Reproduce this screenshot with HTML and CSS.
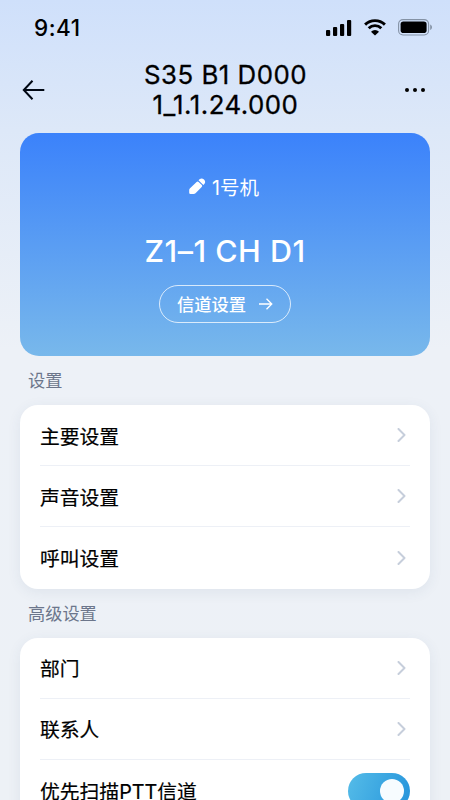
FILE: index.html
```html
<!DOCTYPE html>
<html lang="zh-CN">
<head>
  <meta charset="UTF-8">
  <meta name="viewport" content="width=device-width, initial-scale=1">
  <title>设置</title>
  <link rel="stylesheet" href="styles.css">
</head>
<body>
  <div class="status-bar">
    <span class="time">9:41</span>
    <div class="status-icons">
      <svg width="26" height="16" viewBox="0 0 26 16">
        <rect x="0" y="10" width="4.2" height="6" rx="1"/>
        <rect x="7" y="7" width="4.2" height="9" rx="1"/>
        <rect x="14" y="4" width="4.2" height="12" rx="1"/>
        <rect x="21" y="0" width="4.2" height="16" rx="1"/>
      </svg>
      <svg width="24" height="17" viewBox="0 0 24 17">
        <path d="M2.1 5.6A14.2 14.2 0 0 1 21.9 5.6M5.7 9.2A9 9 0 0 1 18.3 9.2" fill="none" stroke="#000" stroke-width="2.9"/>
        <path d="M8 12.7A5.8 5.8 0 0 1 16 12.7L12 16.6Z"/>
      </svg>
      <svg width="35" height="17" viewBox="0 0 35 17">
        <rect x=".6" y=".6" width="30" height="15.4" rx="4.4" fill="none" stroke="#8492a5" stroke-width="1.1"/>
        <rect x="2.6" y="2.6" width="26" height="11.4" rx="2.8"/>
        <path d="M32.2 5.6C34.6 6.6 34.6 10 32.2 11Z" fill="#8492a5"/>
      </svg>
    </div>
  </div>

  <div class="header">
    <svg class="back" width="24" height="22" viewBox="0 0 24 22">
      <path d="M22.3 11H2M10.5 1.7L1.8 11L10.5 20.3" fill="none" stroke="#000713" stroke-width="2"/>
    </svg>
    <h1>S35 B1 D000<br>1_1.1.24.000</h1>
    <svg class="more" width="20" height="4" viewBox="0 0 20 4">
      <circle cx="2" cy="2" r="2"/>
      <circle cx="10" cy="2" r="2"/>
      <circle cx="18" cy="2" r="2"/>
    </svg>
  </div>

  <div class="device-card">
    <div class="device-name">
      <svg width="17" height="17" viewBox="0 0 17 17" fill="#fff">
        <path d="M.8 10.5L7.6 3.9Q8.6 2.9 9.6 3.9L12.8 7.1Q13.7 8 12.7 9L6.5 15.2Q5.7 16 4.7 16H1.5Q.2 16 .2 14.7V12Q.2 11.1 .8 10.5Z"/>
        <path d="M9.5 2.3L10.5 1.3Q12.8 -.6 15 1.6Q17.2 3.8 15.3 6.1L14.3 7.1Z"/>
      </svg>
      <span>1号机</span>
    </div>
    <div class="channel">Z1–1 CH D1</div>
    <button class="channel-button">
      <span>信道设置</span>
      <svg width="14" height="12" viewBox="0 0 14 12">
        <path d="M0 6H12.7M7.5 .7L12.8 6L7.5 11.3" fill="none" stroke="#fff" stroke-width="1.3"/>
      </svg>
    </button>
  </div>

  <h2>设置</h2>
  <div class="list">
    <div class="row">
      <span>主要设置</span>
      <svg class="chevron" width="9" height="14" viewBox="0 0 9 14"><path d="M1.5 1L7.5 7L1.5 13"/></svg>
    </div>
    <div class="row">
      <span>声音设置</span>
      <svg class="chevron" width="9" height="14" viewBox="0 0 9 14"><path d="M1.5 1L7.5 7L1.5 13"/></svg>
    </div>
    <div class="row">
      <span>呼叫设置</span>
      <svg class="chevron" width="9" height="14" viewBox="0 0 9 14"><path d="M1.5 1L7.5 7L1.5 13"/></svg>
    </div>
  </div>

  <h2>高级设置</h2>
  <div class="list">
    <div class="row">
      <span>部门</span>
      <svg class="chevron" width="9" height="14" viewBox="0 0 9 14"><path d="M1.5 1L7.5 7L1.5 13"/></svg>
    </div>
    <div class="row">
      <span>联系人</span>
      <svg class="chevron" width="9" height="14" viewBox="0 0 9 14"><path d="M1.5 1L7.5 7L1.5 13"/></svg>
    </div>
    <div class="row">
      <span>优先扫描PTT信道</span>
      <div class="toggle"><div class="knob"></div></div>
    </div>
  </div>
</body>
</html>
```

FILE: styles.css
```css
* {
  box-sizing: border-box;
}
body {
  margin: 0;
  height: 800px;
  padding: 0 20px;
  overflow: hidden;
  font-family: Inter, "Noto Sans CJK SC", sans-serif;
  color: #000;
  background: linear-gradient(#cfe0fb 0, #dde8f8 130px, #edf1f7 350px, #edf1f6 100%);
}
.status-bar {
  display: flex;
  align-items: center;
  justify-content: space-between;
  height: 55px;
  padding-left: 14px;
}
.time {
  font-size: 22.5px;
  font-weight: 500;
  letter-spacing: 0.5px;
}
.status-icons {
  display: flex;
  align-items: center;
  gap: 11px;
  margin-right: -3px;
}
.header {
  display: flex;
  align-items: center;
  justify-content: space-between;
  height: 78px;
  padding: 0 5px 8px 2px;
}
h1 {
  margin: 0;
  font-size: 25.8px;
  font-weight: 400;
  line-height: 30px;
  letter-spacing: 0.5px;
  text-align: center;
  -webkit-text-stroke: 0.3px #000;
}
.device-card {
  display: flex;
  flex-direction: column;
  align-items: center;
  height: 223px;
  padding-top: 39px;
  border-radius: 19px;
  color: #fff;
  background: linear-gradient(#3b82fb, #78b8eb);
}
.device-name {
  display: flex;
  align-items: center;
  gap: 6px;
  height: 28px;
  margin-right: 2px;
  font-size: 19.5px;
}
.channel {
  margin-top: 31px;
  font-size: 30.5px;
  font-weight: 500;
  line-height: 40px;
  letter-spacing: 0.5px;
}
.channel-button {
  display: flex;
  align-items: center;
  justify-content: center;
  gap: 13px;
  width: 132px;
  height: 38px;
  margin-top: 14px;
  padding: 0;
  border: 1px solid rgba(255, 255, 255, 0.75);
  border-radius: 19px;
  color: #fff;
  background: none;
  font-family: inherit;
  font-size: 17.3px;
  font-weight: 500;
}
.channel-button span {
  padding-bottom: 2px;
}
h2 {
  margin: 0;
  padding-left: 8px;
  height: 49px;
  font-size: 17.2px;
  font-weight: 400;
  line-height: 50px;
  color: #6c768b;
}
.list {
  padding: 0 20px;
  border-radius: 18px;
  background: #fff;
  box-shadow: 0 3px 14px rgba(50, 75, 110, 0.08);
}
.row {
  display: flex;
  align-items: center;
  justify-content: space-between;
  height: 61.2px;
  border-bottom: 1px solid #edf0f6;
  font-size: 19.8px;
  font-weight: 400;
  -webkit-text-stroke: 0.2px #000;
}
.row:last-child {
  border-bottom: none;
}
.chevron {
  margin-right: 4px;
  fill: none;
  stroke: #c6cedb;
  stroke-width: 2;
  stroke-linecap: round;
  stroke-linejoin: round;
}
.toggle {
  display: flex;
  align-items: center;
  justify-content: flex-end;
  width: 62px;
  height: 36px;
  padding-right: 6px;
  border-radius: 18px;
  background: linear-gradient(110deg, #55bce8, #2493db);
}
.knob {
  width: 24px;
  height: 24px;
  border-radius: 50%;
  background: #f7fcff;
}
```
